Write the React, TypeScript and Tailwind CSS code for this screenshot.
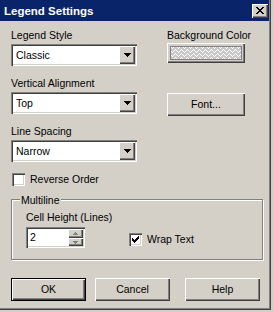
import React from "react";

const raised =
  "shadow-[inset_1px_1px_0_#fff,inset_-1px_-1px_0_#404040,inset_-2px_-2px_0_#808080]";
const sunken =
  "shadow-[inset_1px_1px_0_#808080,inset_2px_2px_0_#404040,inset_-1px_-1px_0_#fff,inset_-2px_-2px_0_#d4d0c8]";

function DownArrow() {
  return (
    <svg width="7" height="4" shapeRendering="crispEdges">
      <path d="M0 0h7v1h-1v1h-1v1h-1v1h-1v-1h-1v-1h-1v-1h-1z" fill="#000" />
    </svg>
  );
}

function Select({ value }: { value: string }) {
  return (
    <div className={`h-[22px] w-[126px] bg-white flex items-center ${sunken}`}>
      <span className="flex-1 pl-[5px] leading-[14px]">{value}</span>
      <div
        className={`w-[16px] h-[18px] mr-[2px] bg-[#d4d0c8] flex items-center justify-center ${raised}`}
      >
        <DownArrow />
      </div>
    </div>
  );
}

function Check({ checked }: { checked?: boolean }) {
  const cols = [5, 6, 7, 6, 5, 4, 3];
  return (
    <div className={`w-[13px] h-[13px] bg-white shrink-0 ${sunken}`}>
      {checked && (
        <svg width="13" height="13" shapeRendering="crispEdges">
          {cols.map((y, i) => (
            <rect key={i} x={3 + i} y={y} width="1" height="3" fill="#000" />
          ))}
        </svg>
      )}
    </div>
  );
}

function Button({
  children,
  def,
  className,
}: {
  children: React.ReactNode;
  def?: boolean;
  className?: string;
}) {
  return (
    <div
      className={`h-[23px] w-[75px] bg-[#d4d0c8] flex items-center justify-center ${
        def
          ? "shadow-[inset_0_0_0_1px_#000,inset_1px_1px_0_1px_#fff,inset_-1px_-1px_0_1px_#404040,inset_-2px_-2px_0_1px_#808080]"
          : raised
      } ${className ?? ""}`}
    >
      {children}
    </div>
  );
}

function CloseX() {
  const rows: [number, number][][] = [
    [[0, 2], [6, 2]],
    [[1, 2], [5, 2]],
    [[2, 4]],
    [[3, 2]],
    [[2, 4]],
    [[1, 2], [5, 2]],
    [[0, 2], [6, 2]],
  ];
  return (
    <svg width="8" height="7" shapeRendering="crispEdges">
      {rows.map((r, y) =>
        r.map(([x, w], k) => (
          <rect key={`${y}-${k}`} x={x} y={y} width={w} height="1" fill="#000" />
        ))
      )}
    </svg>
  );
}

function SpinArrow({ up }: { up?: boolean }) {
  return (
    <svg width="5" height="3" shapeRendering="crispEdges">
      <path
        d={up ? "M2 0h1v1h1v1h1v1h-5v-1h1v-1h1z" : "M0 0h5v1h-1v1h-1v1h-1v-1h-1v-1h-1z"}
        fill="#808080"
      />
    </svg>
  );
}

export default function App() {
  return (
    <div className="w-[274px] h-[312px] bg-[#d4d0c8] overflow-hidden font-['Liberation_Sans',Arial,sans-serif] text-[10.5px] text-black">
      <div className="w-[271px] h-[310px] flex flex-col pr-[2px] pb-[2px] shadow-[inset_-1px_-1px_0_#404040,inset_-2px_-2px_0_#808080]">
        {/* Title bar */}
        <div className="h-[21px] bg-[#0a246a] flex items-center justify-between pl-[4px] pr-[1px]">
          <span className="text-white font-bold text-[11.5px] leading-[14px]">
            Legend Settings
          </span>
          <div
            className={`w-[16px] h-[14px] bg-[#d4d0c8] flex items-center justify-center ${raised}`}
          >
            <CloseX />
          </div>
        </div>

        <div className="flex flex-col pl-[11px]">
          <div className="flex pt-[7px]">
            <div className="w-[126px] flex flex-col">
              <div className="h-[14px] leading-[14px]">Legend Style</div>
              <div className="mt-[2px]">
                <Select value="Classic" />
              </div>
              <div className="h-[14px] leading-[14px] mt-[10px]">Vertical Alignment</div>
              <div className="mt-[2px]">
                <Select value="Top" />
              </div>
              <div className="h-[14px] leading-[14px] mt-[10px]">Line Spacing</div>
              <div className="mt-[2px]">
                <Select value="Narrow" />
              </div>
              <div className="mt-[11px] h-[13px] flex items-center">
                <div className="ml-[1px]">
                  <Check />
                </div>
                <span className="ml-[5px] leading-[13px]">Reverse Order</span>
              </div>
            </div>

            <div className="ml-[30px] w-[78px] flex flex-col">
              <div className="h-[14px] leading-[14px] whitespace-nowrap">Background Color</div>
              <div
                className={`mt-[1px] h-[20px] w-[78px] bg-[#d4d0c8] flex p-[3px] ${raised}`}
              >
                <div className="flex-1 border border-[#808080] shadow-[inset_1px_1px_0_#404040]">
                  <svg width="100%" height="100%" shapeRendering="crispEdges">
                    <defs>
                      <pattern id="dots" width="6" height="4" patternUnits="userSpaceOnUse">
                        <rect width="6" height="4" fill="#c8c8c8" />
                        <rect x="0" y="0" width="1" height="1" fill="#fff" />
                        <rect x="2" y="0" width="1" height="1" fill="#fff" />
                        <rect x="1" y="1" width="1" height="1" fill="#fff" />
                        <rect x="4" y="2" width="1" height="1" fill="#fff" />
                        <rect x="3" y="3" width="1" height="1" fill="#fff" />
                        <rect x="5" y="3" width="1" height="1" fill="#fff" />
                      </pattern>
                    </defs>
                    <rect width="100%" height="100%" fill="url(#dots)" />
                  </svg>
                </div>
              </div>
              <Button className="mt-[30px] w-[78px]">Font...</Button>
            </div>
          </div>

          {/* Multiline group */}
          <div className="mt-[13px] relative w-[252px] h-[61px] border border-[#808080] shadow-[inset_1px_1px_0_#fff,1px_1px_0_#fff]">
            <span className="absolute -top-[7px] left-[8px] px-[1px] bg-[#d4d0c8] leading-[14px]">
              Multiline
            </span>
            <div className="pt-[10px] pl-[14px] flex flex-col">
              <div className="h-[14px] leading-[14px]">Cell Height (Lines)</div>
              <div className="mt-[3px] flex items-start">
                <div className={`w-[59px] h-[21px] bg-white flex ${sunken}`}>
                  <span className="flex-1 pl-[4px] pt-[4px] leading-[13px]">2</span>
                  <div className="flex flex-col my-[2px] mr-[2px]">
                    <div
                      className={`w-[15px] h-[9px] bg-[#d4d0c8] flex items-center justify-center ${raised}`}
                    >
                      <SpinArrow up />
                    </div>
                    <div
                      className={`w-[15px] h-[8px] bg-[#d4d0c8] flex items-center justify-center ${raised}`}
                    >
                      <SpinArrow />
                    </div>
                  </div>
                </div>
                <div className="ml-[44px] mt-[6px] flex items-center h-[13px]">
                  <Check checked />
                  <span className="ml-[5px] leading-[13px]">Wrap Text</span>
                </div>
              </div>
            </div>
          </div>

          {/* Buttons */}
          <div className="mt-[18px] flex">
            <Button def>OK</Button>
            <Button className="ml-[9px]">Cancel</Button>
            <Button className="ml-[15px]">Help</Button>
          </div>
        </div>
      </div>
    </div>
  );
}
